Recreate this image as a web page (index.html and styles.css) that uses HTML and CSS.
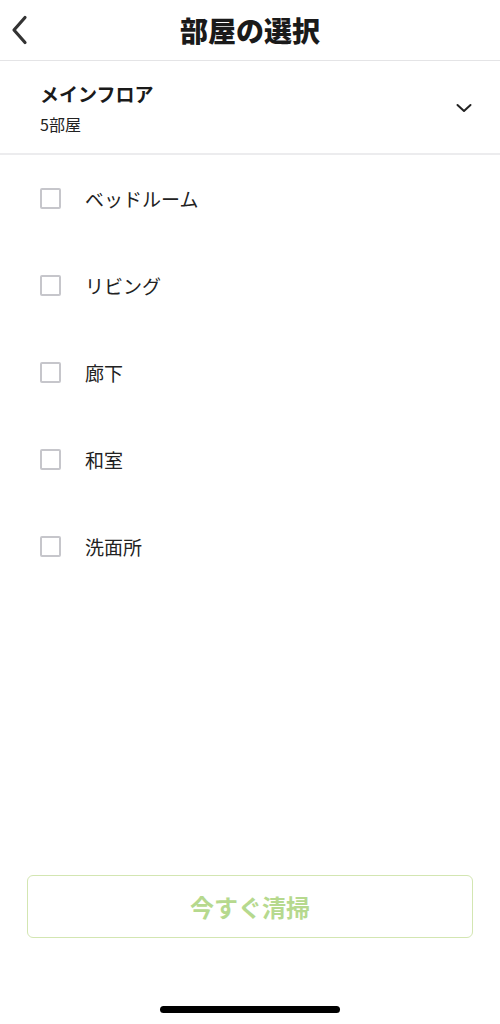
FILE: index.html
```html
<!doctype html>
<html lang="ja">
    <head>
        <meta charset="UTF-8" />
        <meta name="viewport" content="width=device-width, initial-scale=1.0" />
        <title>部屋の選択</title>
        <link rel="stylesheet" href="styles.css">
    </head>
    <body>
        <div class="screen">
            <header class="top-bar">
                <button class="back-button" aria-label="戻る">
                    <svg width="20" height="30" viewBox="0 0 20 30">
                        <path d="M15 2.5 L4 15 L15 27.5" fill="none" stroke="#333" stroke-width="3.2" stroke-linecap="round" stroke-linejoin="round" />
                    </svg>
                </button>
                <h1 class="title">部屋の選択</h1>
            </header>

            <div class="floor">
                <div class="floor-info">
                    <div class="floor-name">メインフロア</div>
                    <div class="floor-count">5部屋</div>
                </div>
                <svg class="floor-toggle" width="16" height="10" viewBox="0 0 16 10">
                    <path d="M1.5 2 L8 8 L14.5 2" fill="none" stroke="#222" stroke-width="2" stroke-linecap="round" stroke-linejoin="round" />
                </svg>
            </div>

            <ul class="room-list">
                <li class="room"><span class="checkbox"></span>ベッドルーム</li>
                <li class="room"><span class="checkbox"></span>リビング</li>
                <li class="room"><span class="checkbox"></span>廊下</li>
                <li class="room"><span class="checkbox"></span>和室</li>
                <li class="room"><span class="checkbox"></span>洗面所</li>
            </ul>

            <div class="footer">
                <button class="clean-button" disabled>今すぐ清掃</button>
                <div class="home-indicator"></div>
            </div>
        </div>
    </body>
</html>
```

FILE: styles.css
```css
body {
    margin: 0;
    font-family: "Noto Sans CJK JP", "Noto Sans", sans-serif;
    background: #ffffff;
    color: #1a1a1a;
}
.screen {
    display: flex;
    flex-direction: column;
    height: 1024px;
}
.top-bar {
    position: relative;
    height: 60px;
    display: flex;
    align-items: center;
    justify-content: center;
    border-bottom: 1px solid #e4e4e6;
}
.back-button {
    position: absolute;
    left: 10px;
    top: 15px;
    padding: 0;
    border: none;
    background: none;
    cursor: pointer;
}
.title {
    margin: 0;
    font-size: 28px;
    font-weight: 900;
    line-height: 1;
    color: #1a1a1a;
}
.floor {
    height: 92px;
    display: flex;
    align-items: center;
    justify-content: space-between;
    padding: 0 28px 0 40px;
    border-bottom: 2px solid #ececee;
}
.floor-name {
    font-size: 19px;
    font-weight: bold;
    line-height: 1;
    margin-top: 1px;
}
.floor-count {
    font-size: 16px;
    line-height: 1;
    margin-top: 13px;
    color: #222;
}
.floor-toggle {
    margin-top: 2px;
}
.room-list {
    list-style: none;
    margin: 0;
    padding: 0;
}
.room {
    height: 87px;
    display: flex;
    align-items: center;
    padding-left: 40px;
    font-size: 19px;
    color: #222;
}
.checkbox {
    width: 17px;
    height: 17px;
    border: 2px solid #c6c6cb;
    border-radius: 2px;
    margin-right: 24px;
}
.footer {
    margin-top: auto;
    display: flex;
    flex-direction: column;
    align-items: center;
    padding: 0 27px;
}
.clean-button {
    width: 100%;
    height: 63px;
    border: 1.5px solid #d3e6b2;
    border-radius: 6px;
    background: #ffffff;
    color: #b6d98e;
    font-family: inherit;
    font-size: 24px;
    font-weight: bold;
}
.home-indicator {
    width: 180px;
    height: 7px;
    border-radius: 4px;
    background: #000;
    margin: 68px 0 11px;
}
```
